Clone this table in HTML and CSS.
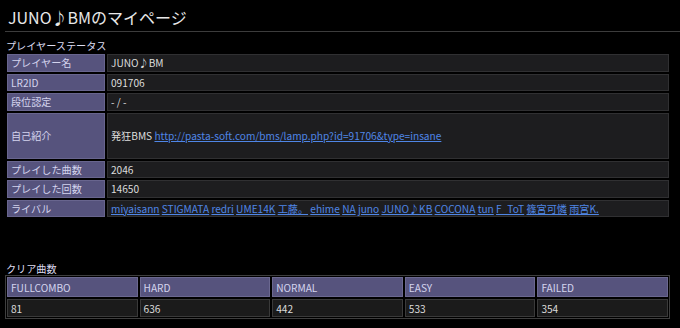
FILE: index.html
```html
<!DOCTYPE html>
<html lang="ja">
<head>
<meta charset="utf-8">
<title>JUNO♪BMのマイページ</title>
<link rel="stylesheet" href="styles.css">
</head>
<body>
<div class="page">
  <h1 class="title">JUNO♪BMのマイページ</h1>
  <h2 class="section">プレイヤーステータス</h2>
  <table class="status">
    <tr><th class="label">プレイヤー名</th><td class="value">JUNO♪BM</td></tr>
    <tr><th class="label">LR2ID</th><td class="value">091706</td></tr>
    <tr><th class="label">段位認定</th><td class="value">- / -</td></tr>
    <tr class="tall"><th class="label">自己紹介</th><td class="value">発狂BMS <a href="#">http://pasta-soft.com/bms/lamp.php?id=91706&amp;type=insane</a></td></tr>
    <tr><th class="label">プレイした曲数</th><td class="value">2046</td></tr>
    <tr><th class="label">プレイした回数</th><td class="value">14650</td></tr>
    <tr><th class="label">ライバル</th><td class="value rivals"><a href="#">miyaisann</a> <a href="#">STIGMATA</a> <a href="#">redri</a> <a href="#">UME14K</a> <a href="#">工藤。</a> <a href="#">ehime</a> <a href="#">NA</a> <a href="#">juno</a> <a href="#">JUNO♪KB</a> <a href="#">COCONA</a> <a href="#">tun</a> <a href="#">F_ToT</a> <a href="#">篠宮可憐</a> <a href="#">雨宮K.</a></td></tr>
  </table>
  <h2 class="section second">クリア曲数</h2>
  <table class="clear">
    <tr><th>FULLCOMBO</th><th>HARD</th><th>NORMAL</th><th>EASY</th><th>FAILED</th></tr>
    <tr><td>81</td><td>636</td><td>442</td><td>533</td><td>354</td></tr>
  </table>
</div>
</body>
</html>
```
FILE: styles.css
```css
html, body {
  margin: 0;
  padding: 0;
  background: #000;
}
body {
  color: #dcdcdc;
  font-family: "Noto Sans CJK JP", "Noto Sans", sans-serif;
  font-size: 10.15px;
}
.page {
  padding-left: 5px;
}
.title {
  margin: 7px 0 0;
  padding: 0 0 4px 3px;
  font-size: 16px;
  line-height: 20px;
  font-weight: normal;
  color: #e8e8e8;
  border-bottom: 1px solid #3c3c3c;
}
.section {
  margin: 7px 0 0 1px;
  font-size: 10.15px;
  line-height: 13px;
  font-weight: normal;
  color: #dcdcf0;
}
.section.second {
  margin-top: 43px;
}
.status {
  width: 666px;
  border-collapse: separate;
  border-spacing: 2px;
  table-layout: fixed;
}
.status .label {
  width: 93px;
  height: 15.5px;
  padding: 0 0 0 3px;
  text-align: left;
  font-weight: normal;
  color: #d4d4ee;
  background: #56537d;
  border: 1px solid #68658e;
  white-space: nowrap;
}
.status .value {
  height: 15.5px;
  padding: 0 0 0 3px;
  background: #1d1d1f;
  border: 1px solid #303032;
  color: #dcdcdc;
  white-space: nowrap;
}
.status .tall .label,
.status .tall .value {
  height: 44px;
}
a {
  color: #4f86e6;
  text-decoration: underline;
}
.clear {
  width: 665px;
  border-collapse: separate;
  border-spacing: 2px;
  table-layout: fixed;
  outline: 1px solid #3e3e3e;
  outline-offset: -1px;
}
.clear th {
  height: 18px;
  padding: 0 0 0 3px;
  text-align: left;
  font-weight: normal;
  color: #d4d4ee;
  background: #56537d;
  border: 1px solid #6b6890;
}
.clear td {
  height: 16px;
  padding: 0 0 0 3px;
  background: #1b1b1b;
  border: 1px solid #3a3a3a;
  color: #dcdcdc;
}
```
